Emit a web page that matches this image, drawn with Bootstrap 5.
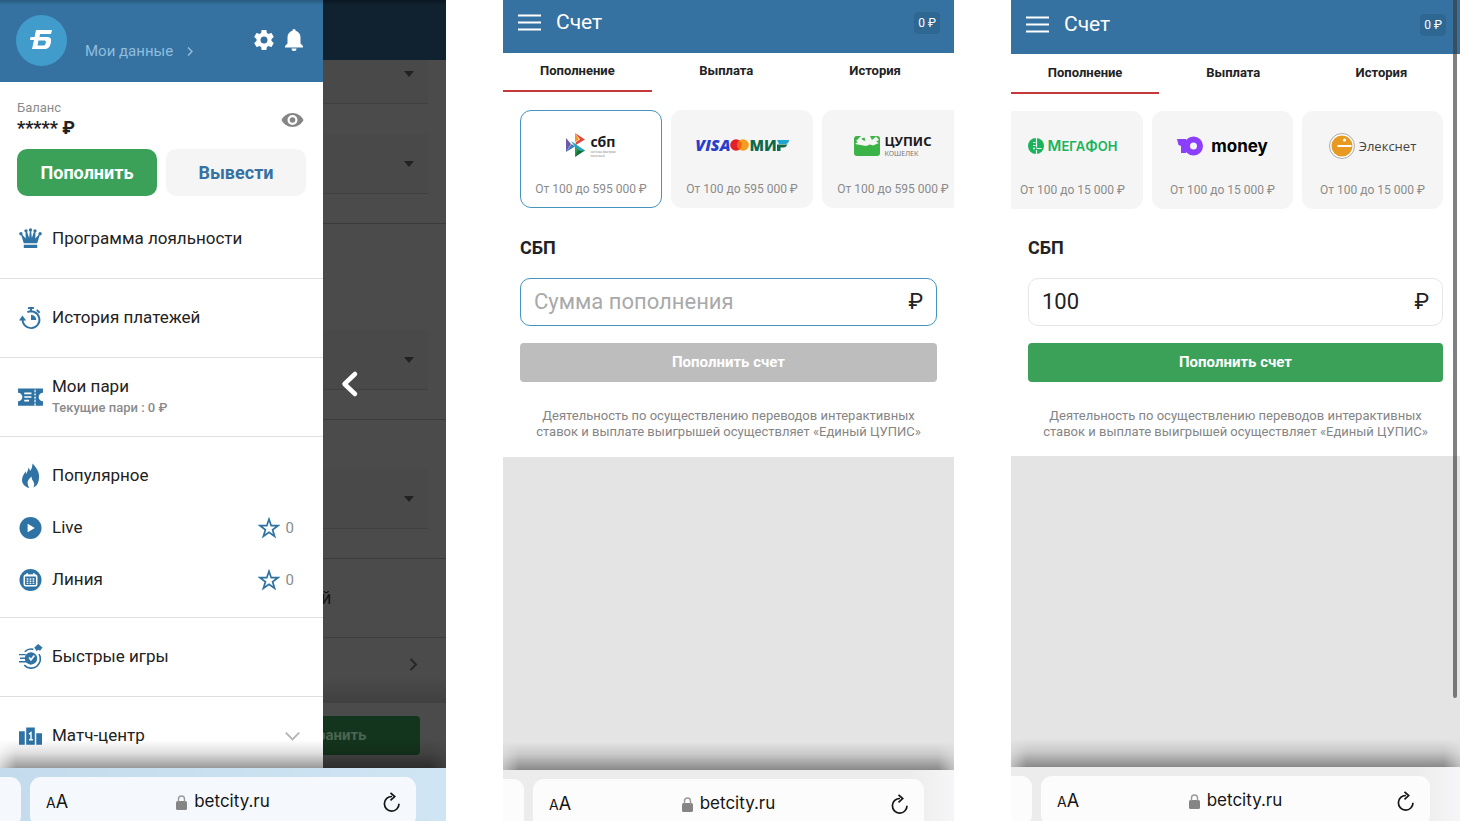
<!DOCTYPE html>
<html lang="ru">
<head>
<meta charset="utf-8">
<meta name="viewport" content="width=device-width, initial-scale=1">
<title>BetCity — Счет</title>
<link href="https://cdn.jsdelivr.net/npm/bootstrap@5.3.0/dist/css/bootstrap.min.css" rel="stylesheet">
<style>
  :root { --blue: #3572a1; --green: #3ba158; --ink: #222; --muted: #8b8b8b; --line: #dfdfdf; --sky: #4495bd; }
  body { font-family: Roboto, "Liberation Sans", sans-serif; color: var(--ink); background: #fff; line-height: 1.25; }
  a { color: inherit; text-decoration: none; }
  .screens { display: grid; grid-template-columns: 446fr 451fr 449fr; column-gap: 57px; height: 100vh; overflow: hidden; }
  .phone { min-width: 0; min-height: 0; overflow: hidden; position: relative; }
  .phone-view { min-height: 0; overflow: hidden; position: relative; }
  .phone-view::after { content: ""; position: absolute; inset: auto 0 0 0; height: 28px; pointer-events: none;
    background: linear-gradient(to bottom, rgba(0,0,0,0), rgba(0,0,0,.12) 45%, rgba(0,0,0,.4));
    -webkit-mask: linear-gradient(to right, rgba(0,0,0,.4), #000 16px, #000 calc(100% - 16px), rgba(0,0,0,.4));
    mask: linear-gradient(to right, rgba(0,0,0,.4), #000 16px, #000 calc(100% - 16px), rgba(0,0,0,.4)); }

  /* browser bar */
  .urlbar { height: 54px; padding: 9px 30px 0 0; gap: 9px; background: linear-gradient(to right, #ececec 90%, #f6f6f8); overflow: hidden; }
  .urlbar-mid { height: 51px; }
  .urlbar-sky { height: 53px; background: linear-gradient(to right, #c3dbec, #cfe5f4); }
  .url-stub { width: 21px; height: 50px; background: #fcfcfc; border-radius: 0 11px 11px 0; }
  .url-pill { height: 50px; background: #fcfcfc; border-radius: 11px; padding: 0 16px; font-family: Inter, "Liberation Sans", sans-serif; color: #151515; }
  .urlbar-sky .url-stub, .urlbar-sky .url-pill { background: #f5f9fd; }
  .bare { border: 0; background: none; padding: 0; color: inherit; line-height: 1; }
  .url-pill .bare { width: 22px; white-space: nowrap; }
  .aa-small { font-size: 14px; } .aa-big { font-size: 18px; }
  .url-name { font-size: 17px; gap: 7px; }

  /* drawer */
  .drawer { width: 323px; flex: none; background: #fff; }
  .drawer-head { height: 82px; padding: 0 19px 2px 16px; background: linear-gradient(#2a5a80, #3572a1 5px); color: #fff; }
  .logo-disc { width: 51px; height: 51px; background: #429ccb; }
  .my-data { font-size: 15px; color: #8fbddd; gap: 14px; padding-top: 22px; margin-left: 18px; }
  .balance { padding: 17px 17px 4px; }
  .balance-cap { font-size: 13px; line-height: 17px; color: var(--muted); }
  .balance-sum { font-size: 18px; line-height: 24px; font-weight: 700; }
  .balance-actions { gap: 9px; margin-top: 9px; }
  .pay-btn { height: 47px; border-radius: 10px; font-size: 18px; font-weight: 700; border: 0; flex: 1 1 0; }
  .btn-go, .btn-go:hover { background: var(--green); color: #fff; }
  .btn-soft { background: #f5f5f5; color: var(--blue); }
  .menu-line { height: 79px; padding: 0 19px; border-bottom: 1px solid var(--line); font-size: 17px; gap: 10px; }
  .menu-line > svg, .menu-item > svg { width: 23px; height: 24px; flex: none; color: #2f73a5; }
  .menu-group { padding: 13px 29px 11px 19px; border-bottom: 1px solid var(--line); font-size: 17px; }
  .menu-item { height: 52px; gap: 10px; }
  .menu-note { font-size: 13px; line-height: 20px; font-weight: 500; color: var(--muted); }
  .fav { font-size: 15px; color: var(--muted); gap: 6px; }
  .fav svg { color: #2f73a5; }

  /* dimmed page behind the drawer */
  .under { background: #4b4b4b; min-width: 0; overflow: hidden; color: #141414; }
  .under-head { height: 60px; background: linear-gradient(#0a1722, #10222f 6px); }
  .under-sec { padding: 0 18px 29px 0; border-bottom: 1px solid #3b3b3b; }
  .under-sec-tall { padding-top: 106px; }
  .under-sec-mid { padding-top: 49px; }
  .under-field { height: 60px; padding-right: 14px; background: #494949; border-bottom: 1px solid #404040; }
  .under-cut { height: 44px; padding-bottom: 16px; margin-bottom: 30px; }
  .under-row { height: 79px; border-bottom: 1px solid #3d3d3d; font-size: 18px; text-indent: -2px; }
  .under-link { height: 65px; padding: 0 28px 12px 0; background: linear-gradient(#4b4b4b 60%, #404040); color: #262626; }
  .under-foot { height: 66px; padding: 13px 26px 0 0; }
  .under-save { height: 39px; width: 100%; background: #14351d; color: #4b6551; border-radius: 0 4px 4px 0; font-size: 15px; font-weight: 700; text-align: left; text-indent: -6px; overflow: hidden; }
  .drawer-close { position: absolute; left: 340px; top: 370px; color: #fff; z-index: 2; }

  /* account */
  .acc-head { height: 53px; padding: 0 14px 8px 15px; background: var(--blue); color: #fff; }
  .acc-title { font-size: 21px; margin-left: 15px; }
  .acc-sum { font-size: 12px; line-height: 22px; padding: 0 4px; border-radius: 4px; background: #2f6793; }
  .acc-tabs { height: 39px; font-size: 13px; font-weight: 700; }
  .acc-tabs a { width: 33%; border-bottom: 2px solid transparent; }
  .acc-tabs a.active { border-color: #c5393c; }
  .methods { padding: 18px 17px 0; gap: 9px; overflow: hidden; }
  .method { width: 142px; height: 98px; flex: none; border: 1px solid #f5f5f5; border-radius: 11px; background: #f5f5f5; padding: 14px 0 0; color: var(--muted); }
  .method-on { border-color: var(--sky); background: #fff; }
  .method-logo { height: 40px; color: #1b1b22; }
  .method-range { font-size: 12px; line-height: 16px; margin-top: 16px; white-space: nowrap; }
  .pay-form { padding: 29px 17px 17px; }
  .pay-form h2 { font-size: 18px; line-height: 22px; font-weight: 700; margin: 0 0 19px; }
  .sum-box { height: 48px; border: 1px solid #e6e6e6; border-radius: 10px; padding: 0 13px; font-size: 22px; }
  .sum-box input { border: 0; outline: 0; background: none; min-width: 0; padding: 0; color: var(--ink); font-size: 22px; }
  .sum-box input::placeholder { color: #a9a9a9; opacity: 1; }
  .sum-on { border-color: var(--sky); }
  .submit-btn { height: 39px; margin-top: 17px; border: 0; border-radius: 4px; font-size: 15px; font-weight: 700; width: 100%; padding: 0; }
  .submit-btn:disabled { background: #bdbdbd; color: #fff; opacity: 1; }
  .legal { margin: 26px 0 0; font-size: 13px; line-height: 16px; color: #858585; text-align: center; }
  .blank { background: #e4e4e4; }
  .acc-b .acc-head { height: 54px; padding-bottom: 5px; }
  .acc-b .acc-tabs { height: 40px; }
  .acc-b .methods { justify-content: flex-end; padding-top: 17px; }
  .acc-b .method { width: 141px; }
  .acc-b .pay-form { padding: 28px 17px 16px; }
  .scroll-thumb { position: absolute; right: 3px; top: 0; width: 4px; height: 85%; border-radius: 0 0 2px 2px; background: rgba(60,60,60,.65); }

  /* brands */
  .b-sbp { font: 700 14px/17px "Open Sans", sans-serif; }
  .b-tiny { font: 400 3px/4px "Open Sans", sans-serif; color: #777; }
  .b-visa { font: italic 800 16px/16px "Open Sans", sans-serif; color: #2a3ecb; }
  .b-mir { font: 800 15px/16px "Open Sans", sans-serif; color: #0d6b4c; }
  .b-tsupis { font: 700 13px/16px "Noto Sans", sans-serif; }
  .b-wallet { font: 400 7px/9px "Noto Sans", sans-serif; color: #777; }
  .b-mega { font: 600 13px/14px Inter, sans-serif; color: #19b35b; }
  .b-mega-cap { font-size: 15px; }
  .b-money { font: 700 17px/20px Inter, sans-serif; color: #000; }
  .b-elex { font: 400 13px/18px "Open Sans", sans-serif; color: #444; }
</style>
</head>
<body>
<main class="screens">

  <section class="phone d-flex flex-column">
    <div class="phone-view d-flex flex-grow-1">
      <nav class="drawer">
        <header class="drawer-head d-flex align-items-center">
          <a href="#" class="logo-disc rounded-circle d-flex align-items-center justify-content-center flex-shrink-0" aria-label="BetCity">
            <svg width="24" height="20" viewBox="0 0 24 20" fill="#fff"><path d="M6 0h16l-1 4H10l-.5 3H17q5 0 4 5l-.5 2q-1 5-6 5H2l2-9H0l.6-3H4.600z M8.500 10.500 7.500 15.500h6q1.500 0 2-1.500l.4-2q.2-1.500-1.400-1.500z" fill-rule="evenodd"/></svg>
          </a>
          <a href="#" class="my-data d-flex align-items-center">Мои данные
            <svg width="6" height="9" viewBox="0 0 6 9" fill="none" stroke="currentColor" stroke-width="1.500"><path d="M1 .5 5 4.500 1 8.500"/></svg></a>
          <button class="bare ms-auto" aria-label="Настройки"><svg width="24" height="24" viewBox="0 0 24 24" fill="currentColor"><path d="M19.430 12.980c.04-.32.07-.64.07-.98s-.03-.66-.07-.98l2.110-1.650c.19-.15.24-.42.12-.64l-2-3.460c-.12-.22-.39-.3-.61-.22l-2.490 1c-.52-.4-1.080-.73-1.690-.98l-.38-2.650C14.460 2.180 14.250 2 14 2h-4c-.25 0-.46.18-.49.42l-.38 2.650c-.61.25-1.170.59-1.690.98l-2.490-1c-.23-.09-.49 0-.61.22l-2 3.460c-.13.22-.07.49.12.64l2.110 1.650c-.04.32-.07.65-.07.98s.03.66.07.98l-2.110 1.650c-.19.15-.24.42-.12.64l2 3.460c.12.22.39.3.61.22l2.490-1c.52.4 1.080.73 1.690.98l.38 2.650c.03.24.24.42.49.42h4c.25 0 .46-.18.49-.42l.38-2.650c.61-.25 1.170-.59 1.690-.98l2.490 1c.23.09.49 0 .61-.22l2-3.460c.12-.22.07-.49-.12-.64zM12 15.500a3.500 3.500 0 1 1 0-7 3.500 3.500 0 0 1 0 7z"/></svg></button>
          <button class="bare ms-2" aria-label="Уведомления"><svg width="20" height="24" viewBox="0 0 20 24" fill="currentColor"><path d="M10 1a1.700 1.700 0 0 1 1.700 1.700C14.600 3.500 16.500 6 16.500 9.500v6L19 18v1.500H1V18l2.500-2.500v-6C3.500 6 5.400 3.500 8.300 2.700A1.700 1.700 0 0 1 10 1zM7.500 20.500h5a2.500 2.500 0 0 1-5 0z"/></svg></button>
        </header>

        <div class="balance">
          <div class="d-flex align-items-center justify-content-between">
            <div><div class="balance-cap">Баланс</div><div class="balance-sum">***** ₽</div></div>
            <button class="bare" aria-label="Показать баланс"><svg width="27" height="24" viewBox="0.500 0 23 24" fill="#858585"><path d="M12 5C7 5 3 8 1 12c2 4 6 7 11 7s9-3 11-7c-2-4-6-7-11-7zm0 12a5 5 0 1 1 0-10 5 5 0 0 1 0 10zm0-2.200a2.800 2.800 0 1 0 0-5.600 2.800 2.800 0 0 0 0 5.600z"/></svg></button>
          </div>
          <div class="balance-actions d-flex">
            <button class="btn btn-go pay-btn p-0">Пополнить</button>
            <button class="btn btn-soft pay-btn p-0">Вывести</button>
          </div>
        </div>

        <a href="#" class="menu-line d-flex align-items-center">
          <svg viewBox="0 0 24 24" fill="currentColor"><path d="M5 18h14v3.500H5zM5 16.500 2.200 7.500 3 7l4 4.500L6.800 4h1.400l2.400 7L11.400 3h1.200l.8 8 2.400-7h1.400L17 11.500 21 7l.8.500-2.800 9z"/><circle cx="2" cy="6.500" r="1.800"/><circle cx="7.300" cy="3.500" r="1.700"/><circle cx="12" cy="2.500" r="1.700"/><circle cx="16.700" cy="3.500" r="1.700"/><circle cx="22" cy="6.500" r="1.800"/></svg>
          Программа лояльности</a>
        <a href="#" class="menu-line d-flex align-items-center">
          <svg viewBox="0 0 24 24" fill="none" stroke="currentColor" stroke-width="2"><path d="M3.800 12.500a8.800 8.800 0 1 0 5-6.700M12.500 5a9 9 0 0 1 5.500 2M9.500 1.500h6M12.500 2v3M18.500 3.500l3 3"/><path d="M12.500 8.500v5.500h5.500a5.500 5.500 0 0 0-5.500-5.500z" fill="currentColor" stroke="none"/><path d="M0 14.500 3.500 9.500 7.500 14.500z" fill="currentColor" stroke="none"/></svg>
          История платежей</a>
        <a href="#" class="menu-line d-flex align-items-center">
          <svg viewBox="0 0 24 24" overflow="visible"><path d="M-1 3h17v18H-1v-4.500a4.500 4.500 0 0 0 0-9zM17.500 3H25v4.500a4.500 4.500 0 0 0 0 9V21h-7.500z" fill="currentColor"/><path d="M16.700 3v18" stroke="currentColor" stroke-width="1.500" stroke-dasharray="2 1.500"/><path d="M5.500 8.200H13M5.500 12H13M5.500 15.800h5" stroke="#fff" stroke-width="1.800"/></svg>
          <span class="d-flex flex-column">Мои пари<span class="menu-note">Текущие пари : 0 ₽</span></span></a>

        <div class="menu-group">
          <a href="#" class="menu-item d-flex align-items-center">
            <svg viewBox="0 0 24 24" fill="currentColor" overflow="visible"><path d="M14-1C20 5 22 10 20.500 17c-.8 4-3 6-5.500 7 1.500-3 1-5-.5-7-1-1.500-1.500-3-1.200-4.500C10 15 8.500 18 9 20c.3 1.500 1 3 1.800 4.500C5 23 2.500 19 3.300 14.500 3.800 11.500 5.500 9.500 7 7c.3 1.500.3 2 .2 3.200C8.800 8 9.500 6 9.800 3.500c1 1 1.500 2 1.700 3.200C13.500 4.500 14 2 14-1z"/></svg>
            Популярное</a>
          <div class="menu-item d-flex align-items-center">
            <svg viewBox="0 0 24 24"><circle cx="12" cy="12" r="11.500" fill="currentColor"/><path d="M9 7.500v9l7.500-4.500z" fill="#fff"/></svg>
            <a href="#">Live</a>
            <span class="fav d-flex align-items-center ms-auto"><svg width="22" height="22" viewBox="0 0 24 24" fill="none" stroke="currentColor" stroke-width="1.900"><path d="m12 2.500 2.400 7h7.300l-5.800 4.400 2.200 7.100-6.100-4.300L5.900 21l2.200-7.100L2.300 9.500h7.300z"/></svg>0</span>
          </div>
          <div class="menu-item d-flex align-items-center">
            <svg viewBox="0 0 24 24"><circle cx="12" cy="12" r="11.500" fill="currentColor"/><rect x="5.500" y="7" width="13" height="11" rx="1.500" fill="none" stroke="#fff" stroke-width="1.600"/><path d="M6 7.500h12M8.500 5v2M15.500 5v2" stroke="#fff" stroke-width="1.800"/><path d="M8 11h8M8 13.300h8M8 15.600h8" stroke="#fff" stroke-width="1.400" stroke-dasharray="1.700 1.400"/></svg>
            <a href="#">Линия</a>
            <span class="fav d-flex align-items-center ms-auto"><svg width="22" height="22" viewBox="0 0 24 24" fill="none" stroke="currentColor" stroke-width="1.900"><path d="m12 2.500 2.400 7h7.300l-5.800 4.400 2.200 7.100-6.100-4.300L5.900 21l2.200-7.100L2.300 9.500h7.300z"/></svg>0</span>
          </div>
        </div>

        <a href="#" class="menu-line d-flex align-items-center">
          <svg viewBox="0 0 24 24" overflow="visible"><circle cx="12.500" cy="13.500" r="6.500" fill="currentColor"/><path d="M14 3.800M21 9a9.700 9.700 0 0 1-15.500 11.500M6 6.500a9.700 9.700 0 0 1 9-2.500" fill="none" stroke="currentColor" stroke-width="1.700"/><path d="M0 9.500h7M1 13.300h6M0 17h8" stroke="currentColor" stroke-width="1.500"/><path d="m10.500 12.500 2 2.500 3.500-4.500" fill="none" stroke="#fff" stroke-width="1.700"/><path d="m16 2 4-3.500L24.500 2 22 5.500l-2-1-1.500 1.500z" fill="currentColor"/></svg>
          Быстрые игры</a>
        <a href="#" class="menu-line d-flex align-items-center">
          <svg viewBox="0 0 24 24"><path d="M0 7h6v14H0zM7.500 3h9v18h-9zM18 9h6v12h-6z" fill="currentColor"/><path d="M10.500 10l2-1.500V16M10.500 16h4" fill="none" stroke="#fff" stroke-width="1.500"/></svg>
          Матч-центр
          <svg class="ms-auto" viewBox="0 0 24 24" fill="none" stroke="#b5b5b5" stroke-width="2"><path d="m5 8.500 7 7 7-7"/></svg></a>
      </nav>

      <div class="under flex-grow-1">
        <div class="under-head"></div>
        <div class="under-sec">
          <div class="under-field under-cut d-flex align-items-center justify-content-end"><svg width="10" height="6" viewBox="0 0 10 6" fill="#222"><path d="M0 0h10L5 6z"/></svg></div>
          <div class="under-field d-flex align-items-center justify-content-end"><svg width="10" height="6" viewBox="0 0 10 6" fill="#222"><path d="M0 0h10L5 6z"/></svg></div>
        </div>
        <div class="under-sec under-sec-tall">
          <div class="under-field d-flex align-items-center justify-content-end"><svg width="10" height="6" viewBox="0 0 10 6" fill="#222"><path d="M0 0h10L5 6z"/></svg></div>
        </div>
        <div class="under-sec under-sec-mid">
          <div class="under-field d-flex align-items-center justify-content-end"><svg width="10" height="6" viewBox="0 0 10 6" fill="#222"><path d="M0 0h10L5 6z"/></svg></div>
        </div>
        <div class="under-row d-flex align-items-center">й</div>
        <div class="under-link d-flex align-items-center justify-content-end"><svg width="9" height="13" viewBox="0 0 9 13" fill="none" stroke="currentColor" stroke-width="2"><path d="m1.500 1 5.500 5.500L1.500 12"/></svg></div>
        <div class="under-foot"><button class="bare under-save">ранить</button></div>
      </div>
      <button class="bare drawer-close" aria-label="Закрыть меню"><svg width="20" height="28" viewBox="0 0 20 28" fill="none" stroke="currentColor" stroke-width="4.500" stroke-linecap="round" stroke-linejoin="round"><path d="M15 4 4.500 14 15 24"/></svg></button>
    </div>
    <footer class="urlbar urlbar-sky d-flex flex-shrink-0">
      <div class="url-stub flex-shrink-0"></div>
      <div class="url-pill flex-grow-1 d-flex align-items-center justify-content-between">
        <button class="bare"><span class="aa-small">A</span><span class="aa-big">A</span></button>
        <span class="url-name d-flex align-items-center"><svg width="11" height="15" viewBox="0 0 11 15"><rect y="6" width="11" height="9" rx="1.500" fill="#858585"/><path d="M2.500 7V4a3 3 0 0 1 6 0v3" fill="none" stroke="#999" stroke-width="1.400"/></svg><a href="#">betcity.ru</a></span>
        <button class="bare text-end" aria-label="Обновить"><svg width="17" height="20" viewBox="0 0 17 20" fill="none" stroke="currentColor" stroke-width="1.700"><path d="M9 4.500a7.300 7.300 0 1 0 7 7.300M7.500 .8l4.200 3.700-4.200 3.900"/></svg></button>
      </div>
    </footer>
  </section>

  <section class="phone d-flex flex-column">
    <div class="phone-view d-flex flex-column flex-grow-1">
      <header class="acc-head d-flex align-items-center flex-shrink-0">
        <button class="bare" aria-label="Меню"><svg width="23" height="17" viewBox="0 0 23 17" stroke="#fff" stroke-width="2"><path d="M0 1.500h23M0 8.500h23M0 15.500h23"/></svg></button>
        <span class="acc-title">Счет</span><span class="acc-sum ms-auto">0 ₽</span>
      </header>
      <nav class="acc-tabs d-flex flex-shrink-0">
        <a href="#" class="active d-flex align-items-center justify-content-center">Пополнение</a>
        <a href="#" class="d-flex align-items-center justify-content-center">Выплата</a>
        <a href="#" class="d-flex align-items-center justify-content-center">История</a>
      </nav>
      <div class="methods d-flex flex-shrink-0">
        <button class="method method-on d-flex flex-column align-items-center">
          <span class="method-logo d-flex align-items-center justify-content-center">
            <svg width="20" height="24" viewBox="0 0 20 24"><path d="M0 5v14l5-8z" fill="#6a5aa8"/><path d="M0 19 9 13.500 5.500 11z" fill="#3f7fc1"/><path d="M9 0v9l4-2.500z" fill="#f39a1e"/><path d="M9 0 19 6.500 9 12.500l1-3.500 4-2.500z" fill="#e2483d"/><path d="M9 12v12l4-6.500z" fill="#2f9a48"/><path d="M9 24 19 17.500 13 15l-2 4z" fill="#116f3c"/><path d="M5 8 19 17.500 14 18 9 14z" fill="#26a6b8"/></svg>
            <span class="d-flex flex-column text-start ms-1"><span class="b-sbp">сбп</span><span class="b-tiny">система быстрых<br>платежей</span></span>
          </span>
          <span class="method-range">От 100 до 595 000 ₽</span>
        </button>
        <button class="method d-flex flex-column align-items-center">
          <span class="method-logo d-flex align-items-center justify-content-center">
            <span class="b-visa">VISA</span>
            <svg width="19" height="12" viewBox="0 0 19 12"><circle cx="6" cy="6" r="5.800" fill="#e32027"/><circle cx="13" cy="6" r="5.800" fill="#f59c1d"/><path d="M9.500 1.400a5.800 5.800 0 0 1 0 9.200 5.800 5.800 0 0 1 0-9.200z" fill="#f0631c"/></svg>
            <span class="b-mir">МИ</span><svg width="12" height="11" viewBox="0 0 12 11"><path d="M0 0h12q0 3-3 4H2z" fill="#1ea5d0"/><path d="M0 4.500h10.500q-1.500 3-4 3H3.500V11H0z" fill="#0d6b4c"/></svg>
          </span>
          <span class="method-range">От 100 до 595 000 ₽</span>
        </button>
        <button class="method d-flex flex-column align-items-center">
          <span class="method-logo d-flex align-items-center justify-content-center">
            <svg width="26" height="21" viewBox="0 0 26 21"><rect y="1" width="26" height="20" rx="3" fill="#3cb346"/><path d="M2 6 7 1h9l2 4 4-3.500 3 3.500-3 1.500 3 1.500-6 2.500-3-1-4 1.500L1 9l3-2z" fill="#f5f5f5"/><path d="M7.500 3.500l3-1 1 3.500-3-1z" fill="#3cb346"/></svg>
            <span class="d-flex flex-column text-start ms-1"><span class="b-tsupis">ЦУПИС</span><span class="b-wallet">КОШЕЛЕК</span></span>
          </span>
          <span class="method-range">От 100 до 595 000 ₽</span>
        </button>
      </div>
      <form class="pay-form">
        <h2><label for="sum-a">СБП</label></h2>
        <div class="sum-box sum-on d-flex align-items-center"><input id="sum-a" type="text" class="flex-grow-1" placeholder="Сумма пополнения"><span>₽</span></div>
        <button type="button" class="btn btn-go submit-btn" disabled>Пополнить счет</button>
        <p class="legal">Деятельность по осуществлению переводов интерактивных<br>ставок и выплате выигрышей осуществляет «Единый ЦУПИС»</p>
      </form>
      <div class="blank flex-grow-1"></div>
    </div>
    <footer class="urlbar urlbar-mid d-flex flex-shrink-0">
      <div class="url-stub flex-shrink-0"></div>
      <div class="url-pill flex-grow-1 d-flex align-items-center justify-content-between">
        <button class="bare"><span class="aa-small">A</span><span class="aa-big">A</span></button>
        <span class="url-name d-flex align-items-center"><svg width="11" height="15" viewBox="0 0 11 15"><rect y="6" width="11" height="9" rx="1.500" fill="#858585"/><path d="M2.500 7V4a3 3 0 0 1 6 0v3" fill="none" stroke="#999" stroke-width="1.400"/></svg><a href="#">betcity.ru</a></span>
        <button class="bare text-end" aria-label="Обновить"><svg width="17" height="20" viewBox="0 0 17 20" fill="none" stroke="currentColor" stroke-width="1.700"><path d="M9 4.500a7.300 7.300 0 1 0 7 7.300M7.500 .8l4.200 3.700-4.200 3.900"/></svg></button>
      </div>
    </footer>
  </section>

  <section class="phone acc-b d-flex flex-column">
    <div class="phone-view d-flex flex-column flex-grow-1">
      <header class="acc-head d-flex align-items-center flex-shrink-0">
        <button class="bare" aria-label="Меню"><svg width="23" height="17" viewBox="0 0 23 17" stroke="#fff" stroke-width="2"><path d="M0 1.500h23M0 8.500h23M0 15.500h23"/></svg></button>
        <span class="acc-title">Счет</span><span class="acc-sum ms-auto">0 ₽</span>
      </header>
      <nav class="acc-tabs d-flex flex-shrink-0">
        <a href="#" class="active d-flex align-items-center justify-content-center">Пополнение</a>
        <a href="#" class="d-flex align-items-center justify-content-center">Выплата</a>
        <a href="#" class="d-flex align-items-center justify-content-center">История</a>
      </nav>
      <div class="methods d-flex flex-shrink-0">
        <button class="method d-flex flex-column align-items-center">
          <span class="method-logo d-flex align-items-center justify-content-center">
            <svg width="16" height="16" viewBox="0 0 16 16"><circle cx="8" cy="8" r="8" fill="#19b35b"/><path d="M8.500 0v9.500M8.500 12v4M5 4.500h2.500M5 7.500h2.500M8.500 10.500h5" stroke="#f5f5f5" stroke-width="1.200"/><circle cx="6" cy="10.500" r="1" fill="#f5f5f5"/></svg>
            <span class="b-mega ms-1"><span class="b-mega-cap">М</span>ЕГА<span class="b-mega-cap">Ф</span>ОН</span>
          </span>
          <span class="method-range">От 100 до 15 000 ₽</span>
        </button>
        <button class="method d-flex flex-column align-items-center">
          <span class="method-logo d-flex align-items-center justify-content-center">
            <svg width="26" height="20" viewBox="0 0 26 20"><path d="M0 3h9v14H4V10L1.500 9z" fill="#8b3ffd"/><circle cx="16.500" cy="10" r="6.500" fill="none" stroke="#8b3ffd" stroke-width="6"/></svg>
            <span class="b-money ms-2">money</span>
          </span>
          <span class="method-range">От 100 до 15 000 ₽</span>
        </button>
        <button class="method d-flex flex-column align-items-center">
          <span class="method-logo d-flex align-items-center justify-content-center">
            <svg width="26" height="26" viewBox="0 0 26 26"><circle cx="13" cy="13" r="12.500" fill="#fff" stroke="#aaa"/><circle cx="13" cy="13" r="10.500" fill="#e79a1f"/><circle cx="15.500" cy="7" r="1.600" fill="#fff"/><path d="M8.500 13h14" stroke="#fff" stroke-width="2"/></svg>
            <span class="b-elex ms-1">Элекснет</span>
          </span>
          <span class="method-range">От 100 до 15 000 ₽</span>
        </button>
      </div>
      <form class="pay-form">
        <h2><label for="sum-b">СБП</label></h2>
        <div class="sum-box d-flex align-items-center"><input id="sum-b" type="text" class="flex-grow-1" value="100"><span>₽</span></div>
        <button type="button" class="btn btn-go submit-btn">Пополнить счет</button>
        <p class="legal">Деятельность по осуществлению переводов интерактивных<br>ставок и выплате выигрышей осуществляет «Единый ЦУПИС»</p>
      </form>
      <div class="blank flex-grow-1"></div>
    </div>
    <div class="scroll-thumb"></div>
    <footer class="urlbar d-flex flex-shrink-0">
      <div class="url-stub flex-shrink-0"></div>
      <div class="url-pill flex-grow-1 d-flex align-items-center justify-content-between">
        <button class="bare"><span class="aa-small">A</span><span class="aa-big">A</span></button>
        <span class="url-name d-flex align-items-center"><svg width="11" height="15" viewBox="0 0 11 15"><rect y="6" width="11" height="9" rx="1.500" fill="#858585"/><path d="M2.500 7V4a3 3 0 0 1 6 0v3" fill="none" stroke="#999" stroke-width="1.400"/></svg><a href="#">betcity.ru</a></span>
        <button class="bare text-end" aria-label="Обновить"><svg width="17" height="20" viewBox="0 0 17 20" fill="none" stroke="currentColor" stroke-width="1.700"><path d="M9 4.500a7.300 7.300 0 1 0 7 7.300M7.500 .8l4.200 3.700-4.200 3.900"/></svg></button>
      </div>
    </footer>
  </section>
</main>
<script src="https://cdn.jsdelivr.net/npm/bootstrap@5.3.0/dist/js/bootstrap.bundle.min.js"></script>
</body>
</html>
